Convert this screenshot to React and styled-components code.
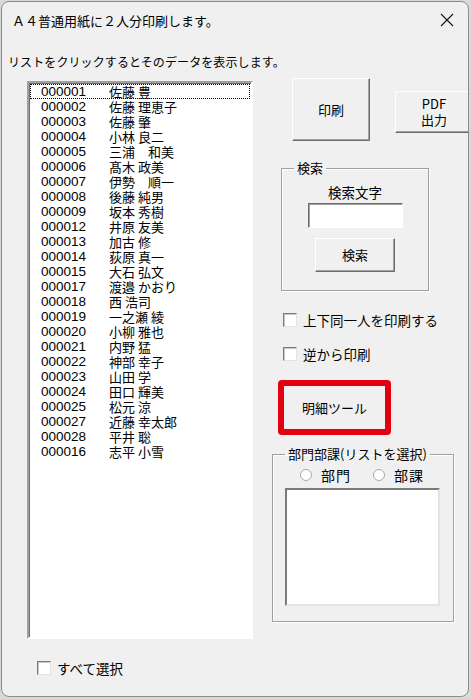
import styled, { createGlobalStyle } from 'styled-components';

const GlobalStyle = createGlobalStyle`
  html, body {
    margin: 0;
    padding: 0;
    background: #d9d9d9;
  }
  body {
    font-family: "Noto Sans CJK JP", "Noto Sans", sans-serif;
    color: #000;
  }
`;

const Window = styled.div`
  box-sizing: border-box;
  width: 468px;
  height: 696px;
  margin: 1px 0 0 1px;
  border: 1px solid #8c8c8c;
  border-radius: 8px;
  background: #f0f0f0;
  overflow: hidden;
  display: flex;
  flex-direction: column;
`;

const TitleBar = styled.div`
  height: 36px;
  display: flex;
  align-items: center;
  justify-content: space-between;
  padding: 0 10px 0 10px;
  font-size: 13px;
`;

const CloseIcon = styled.svg`
  width: 14px;
  height: 14px;
  margin-right: 4px;
`;

const Hint = styled.div`
  font-size: 12px;
  line-height: 14px;
  margin: 17px 0 0 6px;
  letter-spacing: 0.1px;
`;

const Body = styled.div`
  display: flex;
  gap: 19px;
  padding: 7px 0 0 25px;
`;

const LeftCol = styled.div`
  display: flex;
  flex-direction: column;
  padding-top: 5px;
`;

const ListBox = styled.div`
  box-sizing: border-box;
  width: 226px;
  height: ${p => p.$h}px;
  background: #fff;
  border: 2px solid;
  border-color: #a0a0a0 #fff #fff #a0a0a0;
  box-shadow: inset 1px 1px #6d6d6d;
  padding: 1px 1px;
`;

const Row = styled.div`
  display: flex;
  height: 15px;
  line-height: 15px;
  font-size: 13px;
  padding-left: 11px;
  outline: ${p => (p.$focus ? '1px dotted #000' : 'none')};
  outline-offset: -1px;
`;

const Code = styled.span`
  width: 68px;
  font-family: "Liberation Sans", sans-serif;
  font-size: 13.5px;
`;

const Name = styled.span`
  white-space: pre;
`;

const CheckRow = styled.label`
  display: flex;
  align-items: center;
  gap: 6px;
  font-size: 13.5px;
  line-height: 18px;
  margin: ${p => p.$m || '0'};
`;

const Box = styled.span`
  box-sizing: border-box;
  width: 14px;
  height: 14px;
  background: #fff;
  border: 1px solid;
  border-color: #7a7a7a #e3e3e3 #e3e3e3 #7a7a7a;
  box-shadow: inset 1px 1px #c8c8c8;
`;

const RightCol = styled.div`
  display: flex;
  flex-direction: column;
  align-items: flex-start;
  padding-top: 2px;
`;

const ButtonRow = styled.div`
  display: flex;
  align-items: flex-start;
  margin-left: 20px;
`;

const Button = styled.div`
  box-sizing: border-box;
  width: ${p => p.$w}px;
  height: ${p => p.$h}px;
  margin: ${p => p.$m || '0'};
  flex-shrink: 0;
  display: flex;
  align-items: center;
  justify-content: center;
  text-align: center;
  font-size: 13px;
  line-height: 16px;
  background: #f0f0f0;
  border: 1px solid;
  border-color: #fff #6d6d6d #6d6d6d #fff;
  box-shadow: inset -1px -1px #a0a0a0;
`;

const Group = styled.fieldset`
  box-sizing: border-box;
  width: ${p => p.$w}px;
  height: ${p => p.$h}px;
  margin: ${p => p.$m || '0'};
  padding: 0;
  border: 1px solid #a0a0a0;
  box-shadow: 1px 1px #fff, inset 1px 1px #fff;
  display: flex;
  flex-direction: column;
  align-items: center;
`;

const Legend = styled.legend`
  font-size: 13px;
  line-height: 14px;
  padding: 0 3px;
  margin-left: 12px;
`;

const Caption = styled.div`
  font-size: 13.5px;
  line-height: 16px;
  margin-top: 9px;
`;

const TextInput = styled.div`
  box-sizing: border-box;
  width: 95px;
  height: 25px;
  margin: 3px 0 0 0;
  background: #fff;
  border: 1px solid;
  border-color: #6d6d6d #fff #fff #6d6d6d;
  box-shadow: inset 1px 1px #a0a0a0;
`;

const RedButton = styled.div`
  box-sizing: border-box;
  width: 113px;
  height: 55px;
  margin: 17px 0 0 6px;
  border: 6px solid #e3000f;
  border-radius: 4px;
  display: flex;
  align-items: center;
  justify-content: center;
  font-size: 13px;
  padding-bottom: 1px;
`;

const RadioRow = styled.div`
  display: flex;
  gap: 22px;
  margin: 6px 0 0 -2px;
`;

const Radio = styled.label`
  display: flex;
  align-items: center;
  gap: 9px;
  font-size: 14px;
  line-height: 16px;
  letter-spacing: 1px;
`;

const Dot = styled.span`
  box-sizing: border-box;
  width: 12px;
  height: 12px;
  border-radius: 50%;
  background: #fff;
  border: 1px solid #a8a8a8;
`;

const InnerList = styled.div`
  box-sizing: border-box;
  width: 155px;
  height: 118px;
  margin: 5px 2px 0 0;
  background: #fff;
  border: 2px solid;
  border-color: #7a7a7a #e3e3e3 #e3e3e3 #7a7a7a;
`;

const people = [
  ['000001', '佐藤 豊'],
  ['000002', '佐藤 理恵子'],
  ['000003', '佐藤 肇'],
  ['000004', '小林 良二'],
  ['000005', '三浦　和美'],
  ['000006', '髙木 政美'],
  ['000007', '伊勢　順一'],
  ['000008', '後藤 純男'],
  ['000009', '坂本 秀樹'],
  ['000012', '井原 友美'],
  ['000013', '加古 修'],
  ['000014', '荻原 真一'],
  ['000015', '大石 弘文'],
  ['000017', '渡邉 かおり'],
  ['000018', '西 浩司'],
  ['000019', '一之瀬 綾'],
  ['000020', '小柳 雅也'],
  ['000021', '内野 猛'],
  ['000022', '神部 幸子'],
  ['000023', '山田 学'],
  ['000024', '田口 輝美'],
  ['000025', '松元 涼'],
  ['000027', '近藤 幸太郎'],
  ['000028', '平井 聡'],
  ['000016', '志平 小雪'],
];

export default function App() {
  return (
    <>
      <GlobalStyle />
      <Window>
        <TitleBar>
          <span>Ａ４普通用紙に２人分印刷します。</span>
          <CloseIcon viewBox="0 0 14 14">
            <path d="M1 1 L13 13 M13 1 L1 13" stroke="#1a1a1a" strokeWidth="1.2" fill="none" />
          </CloseIcon>
        </TitleBar>
        <Hint>リストをクリックするとそのデータを表示します。</Hint>
        <Body>
          <LeftCol>
            <ListBox $h={558}>
              {people.map(([code, name], i) => (
                <Row key={code} $focus={i === 0}>
                  <Code>{code}</Code>
                  <Name>{name}</Name>
                </Row>
              ))}
            </ListBox>
            <CheckRow $m="20px 0 0 10px">
              <Box />
              すべて選択
            </CheckRow>
          </LeftCol>
          <RightCol>
            <ButtonRow>
              <Button $w={78} $h={63}>印刷</Button>
              <Button $w={78} $h={42} $m="13px 0 0 25px">PDF<br />出力</Button>
            </ButtonRow>
            <Group $w={148} $h={130} $m="20px 0 0 9px">
              <Legend>検索</Legend>
              <Caption>検索文字</Caption>
              <TextInput />
              <Button $w={80} $h={34} $m="10px 0 0 0">検索</Button>
            </Group>
            <CheckRow $m="20px 0 0 11px">
              <Box />
              上下同一人を印刷する
            </CheckRow>
            <CheckRow $m="16px 0 0 11px">
              <Box />
              逆から印刷
            </CheckRow>
            <RedButton>明細ツール</RedButton>
            <Group $w={182} $h={175} $m="12px 0 0 0">
              <Legend>部門部課(リストを選択)</Legend>
              <RadioRow>
                <Radio><Dot />部門</Radio>
                <Radio><Dot />部課</Radio>
              </RadioRow>
              <InnerList />
            </Group>
          </RightCol>
        </Body>
      </Window>
    </>
  );
}
